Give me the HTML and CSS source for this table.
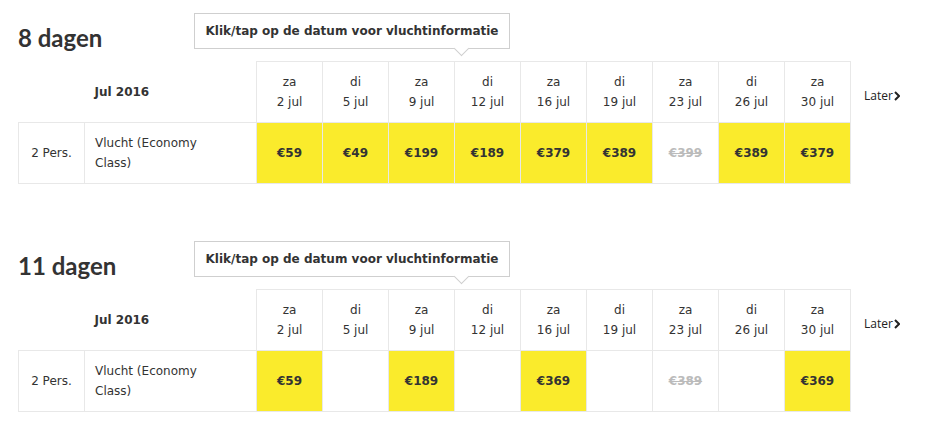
FILE: index.html
```html
<!DOCTYPE html>
<html lang="nl">
<head>
<meta charset="utf-8">
<title>Vluchten</title>
<link rel="stylesheet" href="styles.css">
</head>
<body>
<section class="block">
  <div class="block-head"><h2 class="title">8 dagen</h2></div>
  <div class="tip">Klik/tap op de datum voor vluchtinformatie</div>
  <table class="grid">
    <colgroup><col class="c-pers"><col class="c-desc"><col class="c-day"><col class="c-day"><col class="c-day"><col class="c-day"><col class="c-day"><col class="c-day"><col class="c-day"><col class="c-day"><col class="c-day"><col class="c-later"></colgroup>
    <tr class="head">
      <th class="blank"></th>
      <th class="month">Jul 2016</th>
      <th class="day">za<br>2 jul</th>
      <th class="day">di<br>5 jul</th>
      <th class="day">za<br>9 jul</th>
      <th class="day">di<br>12 jul</th>
      <th class="day">za<br>16 jul</th>
      <th class="day">di<br>19 jul</th>
      <th class="day">za<br>23 jul</th>
      <th class="day">di<br>26 jul</th>
      <th class="day">za<br>30 jul</th>
      <th class="later">Later<svg class="chev" width="6" height="10" viewBox="0 0 6 10"><path d="M1 1 L5 5 L1 9" fill="none" stroke="#222" stroke-width="2"/></svg></th>
    </tr>
    <tr class="body">
      <td class="pers">2 Pers.</td>
      <td class="desc">Vlucht (Economy<br>Class)</td>
      <td class="price on">€59</td>
      <td class="price on">€49</td>
      <td class="price on">€199</td>
      <td class="price on">€189</td>
      <td class="price on">€379</td>
      <td class="price on">€389</td>
      <td class="price off"><s>€399</s></td>
      <td class="price on">€389</td>
      <td class="price on">€379</td>
      <td class="blank"></td>
    </tr>
  </table>
</section>

<section class="block second">
  <div class="block-head"><h2 class="title">11 dagen</h2></div>
  <div class="tip">Klik/tap op de datum voor vluchtinformatie</div>
  <table class="grid">
    <colgroup><col class="c-pers"><col class="c-desc"><col class="c-day"><col class="c-day"><col class="c-day"><col class="c-day"><col class="c-day"><col class="c-day"><col class="c-day"><col class="c-day"><col class="c-day"><col class="c-later"></colgroup>
    <tr class="head">
      <th class="blank"></th>
      <th class="month">Jul 2016</th>
      <th class="day">za<br>2 jul</th>
      <th class="day">di<br>5 jul</th>
      <th class="day">za<br>9 jul</th>
      <th class="day">di<br>12 jul</th>
      <th class="day">za<br>16 jul</th>
      <th class="day">di<br>19 jul</th>
      <th class="day">za<br>23 jul</th>
      <th class="day">di<br>26 jul</th>
      <th class="day">za<br>30 jul</th>
      <th class="later">Later<svg class="chev" width="6" height="10" viewBox="0 0 6 10"><path d="M1 1 L5 5 L1 9" fill="none" stroke="#222" stroke-width="2"/></svg></th>
    </tr>
    <tr class="body">
      <td class="pers">2 Pers.</td>
      <td class="desc">Vlucht (Economy<br>Class)</td>
      <td class="price on">€59</td>
      <td class="price"></td>
      <td class="price on">€189</td>
      <td class="price"></td>
      <td class="price on">€369</td>
      <td class="price"></td>
      <td class="price off"><s>€389</s></td>
      <td class="price"></td>
      <td class="price on">€369</td>
      <td class="blank"></td>
    </tr>
  </table>
</section>
</body>
</html>
```

FILE: styles.css
```css
html, body {
  margin: 0;
  padding: 0;
  background: #fff;
}
body {
  font-family: "DejaVu Sans", Verdana, sans-serif;
  font-size: 12px;
  color: #333;
  padding-left: 18px;
}
.block {
  position: relative;
}
.second {
  margin-top: 44px;
}
.block-head {
  height: 61px;
  display: flex;
  align-items: flex-end;
}
.title {
  margin: 0 0 9px 0;
  font-family: Lato, "Open Sans", sans-serif;
  font-weight: 700;
  font-size: 24px;
  line-height: 28px;
  color: #333;
}
.tip {
  position: absolute;
  left: 176px;
  top: 13px;
  width: 314px;
  height: 34px;
  border: 1px solid #cfcfcf;
  background: #fff;
  font-weight: 700;
  font-size: 12px;
  line-height: 34px;
  text-align: center;
  color: #333;
  box-sizing: content-box;
}
.tip::after {
  content: "";
  position: absolute;
  left: 261px;
  bottom: -6px;
  width: 10px;
  height: 10px;
  background: #fff;
  border-right: 1px solid #cfcfcf;
  border-bottom: 1px solid #cfcfcf;
  transform: rotate(45deg);
}
.grid {
  border-collapse: collapse;
  table-layout: fixed;
  width: 916px;
}
.c-pers { width: 66px; }
.c-desc { width: 172px; }
.c-day { width: 66px; }
.c-later { width: 84px; }
.grid tr { height: 61px; }
.grid th, .grid td {
  padding: 0;
  border: 1px solid #e8e8e8;
  vertical-align: middle;
}
.grid .blank, .grid .month, .grid .later {
  border: none;
}
.grid .month {
  text-align: left;
  padding-left: 10px;
  font-weight: 700;
}
.grid .day {
  font-weight: 400;
  line-height: 20px;
  text-align: center;
}
.grid .later {
  text-align: left;
  padding-left: 13px;
  padding-top: 7px;
  font-weight: 400;
  font-size: 12px;
  font-family: "Open Sans", sans-serif;
  color: #222;
}
.chev {
  margin-left: 1px;
  vertical-align: -1px;
}
.grid .pers {
  text-align: center;
}
.grid .desc {
  padding-left: 10px;
  line-height: 20px;
}
.grid .price {
  text-align: center;
  font-weight: 700;
}
.grid .price.on {
  background: #faeb2c;
}
.grid .price.off {
  color: #bbb;
}
```
